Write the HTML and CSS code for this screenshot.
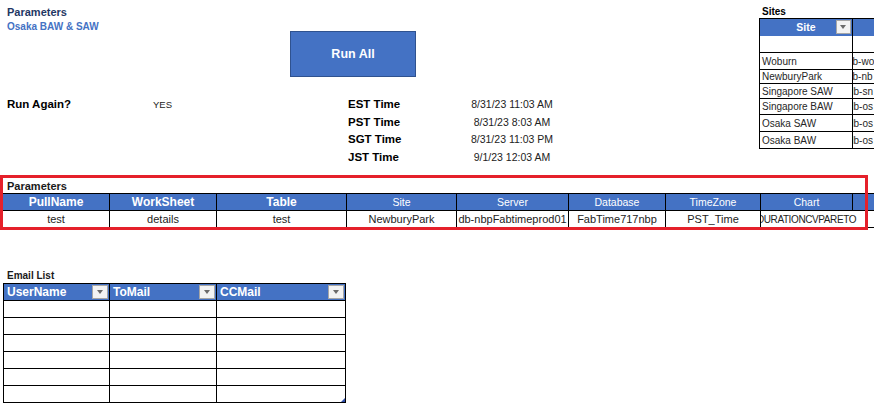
FILE: index.html
```html
<!DOCTYPE html>
<html>
<head>
<meta charset="utf-8">
<title>Parameters</title>
<link rel="stylesheet" href="styles.css">
</head>
<body>
<div class="sheet">
  <div class="top">
    <div class="top-main">
      <div class="head-row">
        <div class="titles">
          <div class="title">Parameters</div>
          <div class="subtitle">Osaka BAW &amp; SAW</div>
        </div>
        <button class="run-all">Run All</button>
      </div>
      <div class="info-row">
        <div class="again">
          <div class="again-label">Run Again?</div>
          <div class="again-value">YES</div>
        </div>
        <div class="times">
          <div class="t-label">EST Time</div><div class="t-value">8/31/23 11:03 AM</div>
          <div class="t-label">PST Time</div><div class="t-value">8/31/23 8:03 AM</div>
          <div class="t-label">SGT Time</div><div class="t-value">8/31/23 11:03 PM</div>
          <div class="t-label">JST Time</div><div class="t-value">9/1/23 12:03 AM</div>
        </div>
      </div>
    </div>
    <div class="sites">
      <div class="sites-label">Sites</div>
      <div class="sites-grid">
        <div class="s-head s-site">Site<span class="dd"></span></div>
        <div class="s-head"></div>
        <div class="s-cell h17"></div><div class="s-cell h17"></div>
        <div class="s-cell h17">Woburn</div><div class="s-cell h17 srv cut6">db-wo</div>
        <div class="s-cell h14">NewburyPark</div><div class="s-cell h14 srv cut6">db-nb</div>
        <div class="s-cell h15">Singapore SAW</div><div class="s-cell h15 srv cut5">db-sn</div>
        <div class="s-cell h16">Singapore BAW</div><div class="s-cell h16 srv cut5">db-os</div>
        <div class="s-cell h17">Osaka SAW</div><div class="s-cell h17 srv cut5">db-os</div>
        <div class="s-cell h17">Osaka BAW</div><div class="s-cell h17 srv cut5">db-os</div>
      </div>
    </div>
  </div>

  <section class="params">
    <div class="frame"></div>
    <div class="sec-label">Parameters</div>
    <div class="pgrid">
      <div class="ph bold">PullName</div>
      <div class="ph bold">WorkSheet</div>
      <div class="ph bold">Table</div>
      <div class="ph">Site</div>
      <div class="ph">Server</div>
      <div class="ph">Database</div>
      <div class="ph">TimeZone</div>
      <div class="ph">Chart</div>
      <div class="ph"></div>
      <div class="pd">test</div>
      <div class="pd">details</div>
      <div class="pd">test</div>
      <div class="pd">NewburyPark</div>
      <div class="pd">db-nbpFabtimeprod01</div>
      <div class="pd">FabTime717nbp</div>
      <div class="pd">PST_Time</div>
      <div class="pd spill"><span>DURATIONCVPARETO</span></div>
      <div class="pd"></div>
    </div>
  </section>

  <section class="email">
    <div class="sec-label small">Email List</div>
    <div class="egrid">
      <div class="eh">UserName<span class="dd"></span></div>
      <div class="eh">ToMail<span class="dd"></span></div>
      <div class="eh">CCMail<span class="dd"></span></div>
      <div class="ec"></div><div class="ec"></div><div class="ec"></div>
      <div class="ec"></div><div class="ec"></div><div class="ec"></div>
      <div class="ec"></div><div class="ec"></div><div class="ec"></div>
      <div class="ec"></div><div class="ec"></div><div class="ec"></div>
      <div class="ec"></div><div class="ec"></div><div class="ec"></div>
      <div class="ec"></div><div class="ec"></div><div class="ec last"></div>
    </div>
  </section>
</div>
</body>
</html>
```

FILE: styles.css
```css
* { box-sizing: border-box; }

html, body {
  margin: 0;
  padding: 0;
  background: #ffffff;
}

body {
  overflow: hidden;
}

.sheet {
  width: 874px;
  height: 411px;
  overflow: hidden;
  font-family: "Liberation Sans", Arial, sans-serif;
  color: #1a1a1a;
}

/* ---------- top area ---------- */
.top {
  display: flex;
  height: 170px;
}

.top-main {
  width: 759px;
  flex: none;
}

.head-row {
  display: flex;
  height: 96px;
}

.titles {
  width: 290px;
  padding: 5px 0 0 7px;
}

.title {
  font-size: 11px;
  font-weight: bold;
  line-height: 14px;
  color: #1f3864;
}

.subtitle {
  font-size: 10px;
  font-weight: bold;
  line-height: 16px;
  color: #4472c4;
}

.run-all {
  margin-top: 31px;
  width: 126px;
  height: 46px;
  padding: 0;
  background: #4472c4;
  border: 1px solid #2f528f;
  color: #ffffff;
  font-family: "Liberation Sans", Arial, sans-serif;
  font-size: 12.5px;
  font-weight: bold;
  cursor: pointer;
}

.info-row {
  display: flex;
  padding-left: 3px;
}

.again {
  width: 343px;
  display: grid;
  grid-template-columns: 106px 107px;
  grid-auto-rows: 17.5px;
  align-content: start;
}

.again-label {
  padding-left: 4px;
  font-size: 11.5px;
  font-weight: bold;
  line-height: 17.5px;
  color: #000;
}

.again-value {
  text-align: center;
  font-size: 9.5px;
  line-height: 17.5px;
  color: #222;
}

.times {
  display: grid;
  grid-template-columns: 110px 112px;
  grid-auto-rows: 17.5px;
}

.t-label {
  padding-left: 2px;
  font-size: 11.5px;
  font-weight: bold;
  line-height: 17.5px;
  color: #000;
}

.t-value {
  text-align: center;
  font-size: 10.5px;
  line-height: 17.5px;
  color: #222;
}

/* ---------- sites ---------- */
.sites {
  flex: 1;
  overflow: hidden;
  padding-top: 5px;
}

.sites-label {
  padding-left: 3px;
  font-size: 10px;
  font-weight: bold;
  line-height: 13px;
  color: #000;
}

.sites-grid {
  display: grid;
  grid-template-columns: 93px 60px;
  border-left: 1px solid #000;
  border-top: 1px solid #000;
}

.s-head {
  position: relative;
  height: 17px;
  background: #4472c4;
  border-right: 1px solid #000;
  color: #fff;
  font-size: 10.5px;
  font-weight: bold;
  line-height: 17px;
  text-align: center;
}

.s-site .dd {
  top: 1px;
  right: 1px;
  width: 15px;
  height: 14px;
}

.s-cell {
  border-right: 1px solid #000;
  border-bottom: 1px solid #000;
  padding-left: 2px;
  font-size: 10px;
  color: #262626;
  white-space: nowrap;
  overflow: hidden;
  display: flex;
  align-items: center;
}

.h14 { height: 14px; }
.h15 { height: 15px; }
.h16 { height: 16px; }
.h17 { height: 17px; }

.srv { padding-left: 0; }
.cut6 { text-indent: -6px; }
.cut5 { text-indent: -5px; }

/* dropdown filter button */
.dd {
  position: absolute;
  background: #f3f3f3;
  border: 1px solid #a6a6a6;
}

.dd::after {
  content: "";
  position: absolute;
  left: 50%;
  top: 50%;
  margin-left: -3.5px;
  margin-top: -2px;
  border-left: 3.5px solid transparent;
  border-right: 3.5px solid transparent;
  border-top: 4px solid #6b6b6b;
}

/* ---------- parameters table ---------- */
.params {
  position: relative;
  padding-top: 9px;
}

.frame {
  position: absolute;
  left: 0;
  top: 5px;
  width: 868px;
  height: 55px;
  border: 3px solid #e5202a;
  pointer-events: none;
  z-index: 2;
}

.sec-label {
  padding-left: 7px;
  font-size: 11px;
  font-weight: bold;
  line-height: 14px;
  color: #1a1a1a;
}

.sec-label.small {
  font-size: 10px;
}

.pgrid {
  margin-left: 3px;
  display: grid;
  grid-template-columns: 107px 107px 130px 110px 112px 97px 95px 92px 60px;
  border-top: 1px solid #000;
}

.ph, .pd {
  height: 17px;
  border-right: 1px solid #000;
  border-bottom: 1px solid #000;
  display: flex;
  align-items: center;
  justify-content: center;
  white-space: nowrap;
}

.ph {
  background: #4472c4;
  color: #fff;
  font-size: 10.5px;
}

.ph.bold {
  font-size: 12px;
  font-weight: bold;
}

.pd {
  font-size: 11px;
  color: #222;
  overflow: hidden;
}

.pd.spill {
  overflow: visible;
  border-right-color: transparent;
  clip-path: inset(0 -40px 0 0);
  font-size: 10px;
  letter-spacing: -0.4px;
  position: relative;
  z-index: 1;
}

/* ---------- email list ---------- */
.email {
  margin-top: 41px;
}

.egrid {
  margin-left: 3px;
  display: grid;
  grid-template-columns: 106px 107px 129px;
  border-left: 1px solid #000;
  border-top: 1px solid #000;
  width: 343px;
}

.eh, .ec {
  position: relative;
  height: 17px;
  border-right: 1px solid #000;
  border-bottom: 1px solid #000;
}

.eh {
  background: #4472c4;
  color: #fff;
  font-size: 12px;
  font-weight: bold;
  line-height: 16px;
  padding-left: 3px;
}

.eh .dd {
  top: 1px;
  right: 1px;
  width: 16px;
  height: 14px;
}

.ec.last::after {
  content: "";
  position: absolute;
  right: 0;
  bottom: 0;
  border-left: 4px solid transparent;
  border-bottom: 4px solid #2f4ea8;
}
```
